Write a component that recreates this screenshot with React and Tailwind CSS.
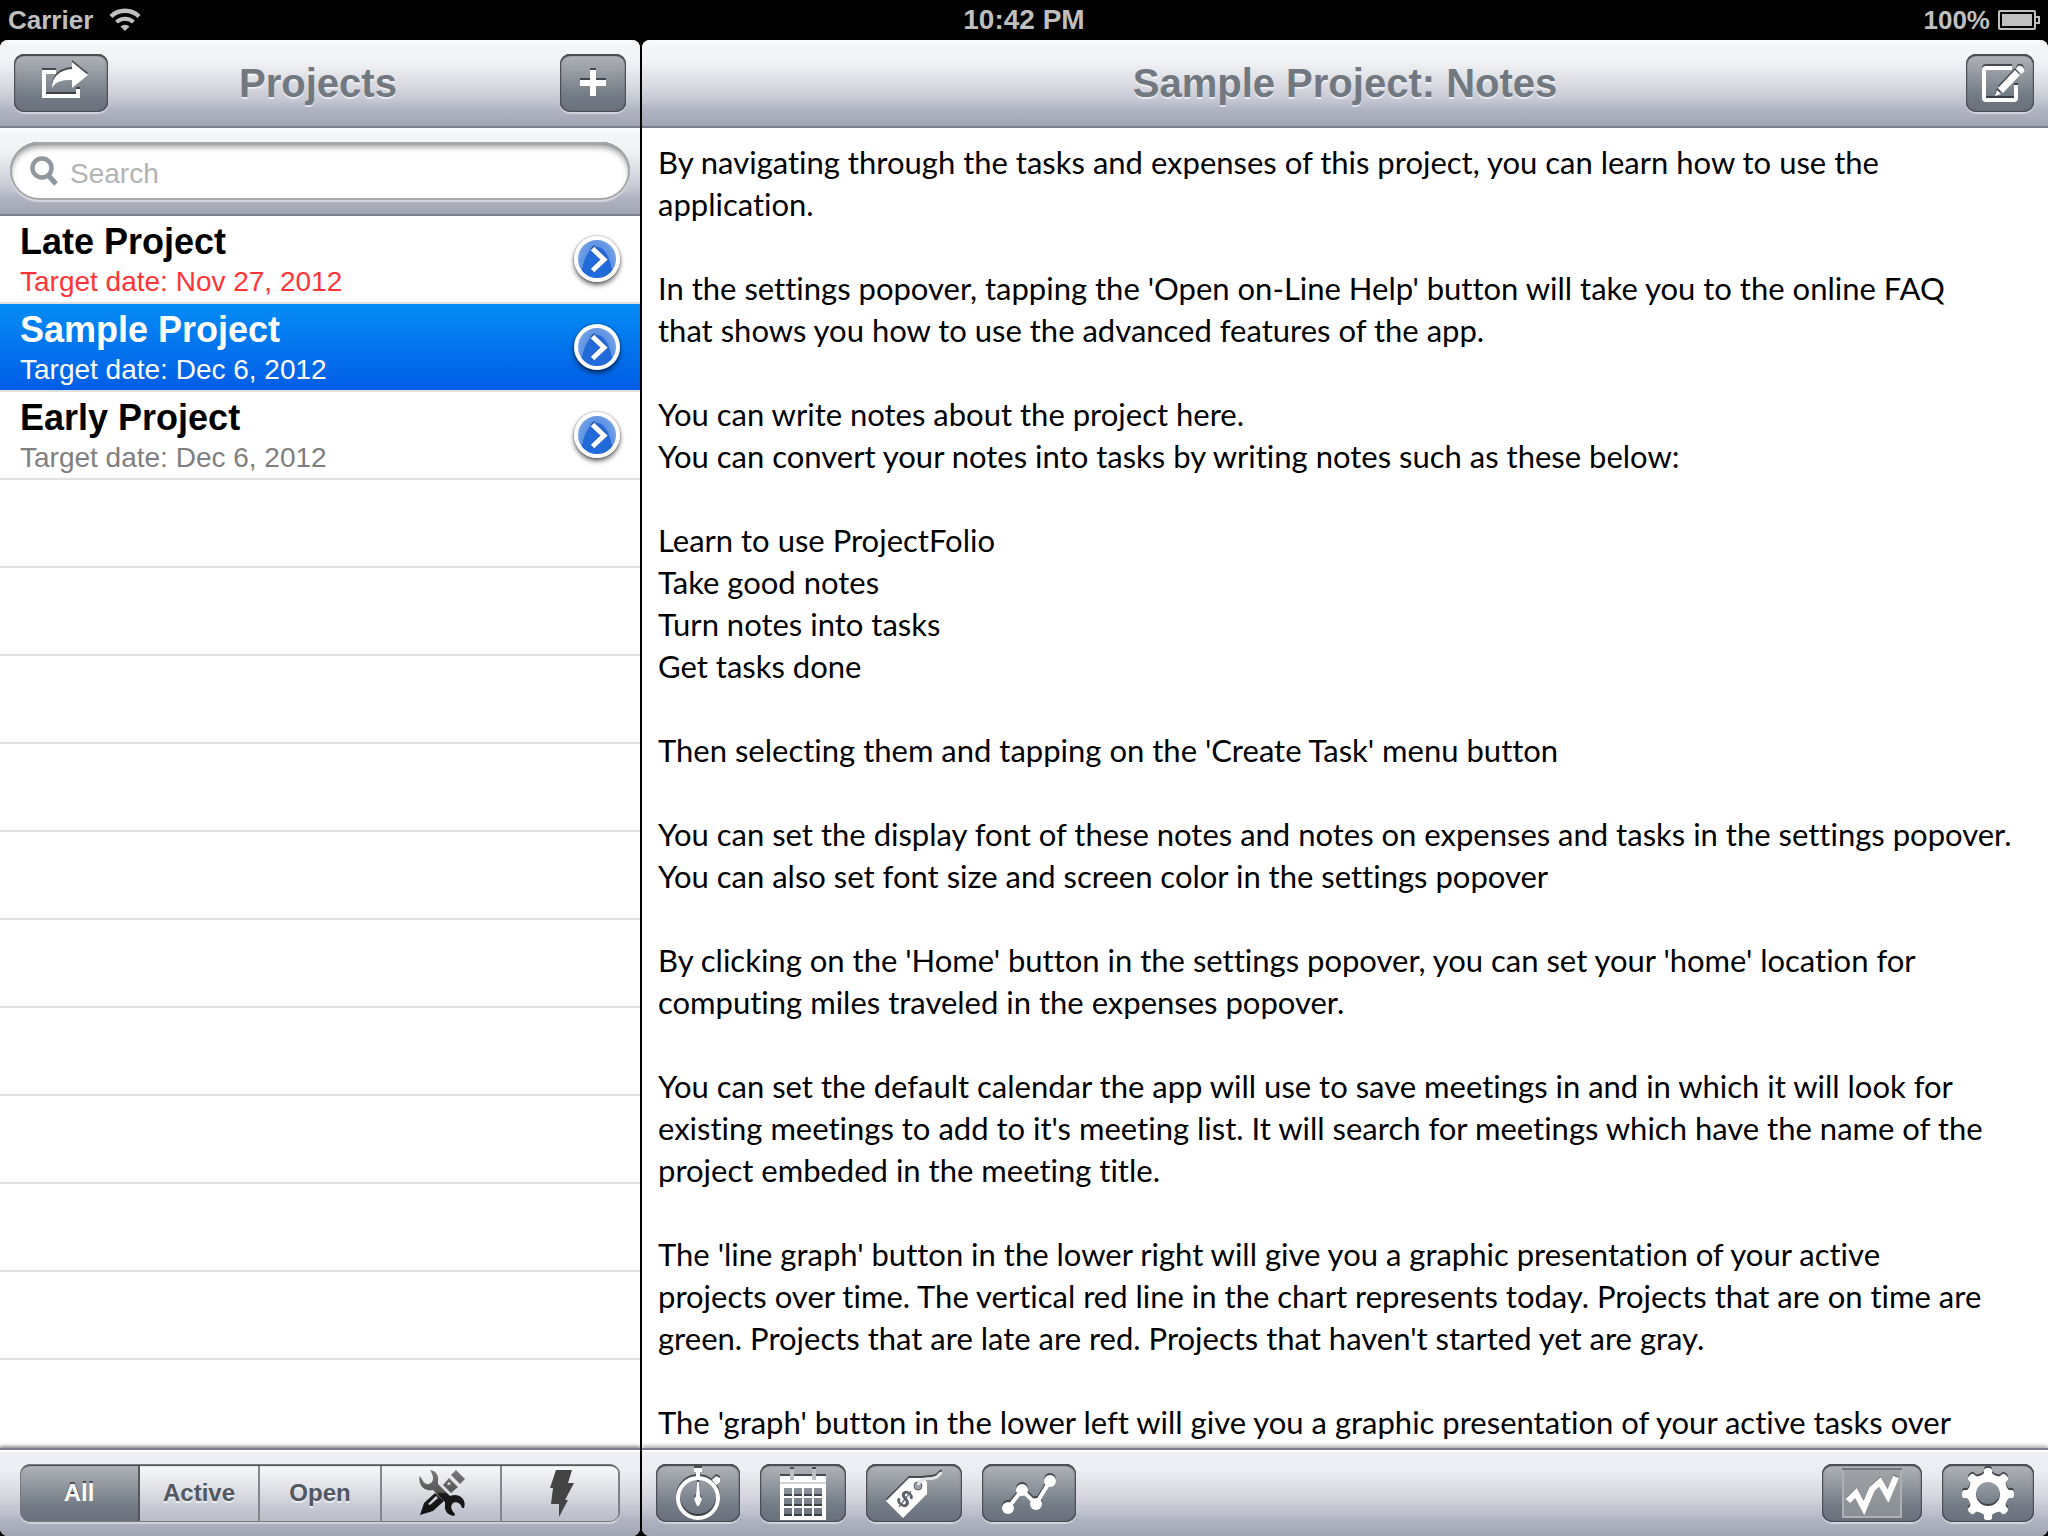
const projects = [
  { name: "Late Project", date: "Nov 27, 2012", state: "late" },
  { name: "Sample Project", date: "Dec 6, 2012", state: "selected" },
  { name: "Early Project", date: "Dec 6, 2012", state: "early" },
];

const emptyRows = Array.from({ length: 11 }, (_, i) => i);

const notes = `By navigating through the tasks and expenses of this project, you can learn how to use the application.

In the settings popover, tapping the 'Open on-Line Help' button will take you to the online FAQ
that shows you how to use the advanced features of the app.

You can write notes about the project here.
You can convert your notes into tasks by writing notes such as these below:

Learn to use ProjectFolio
Take good notes
Turn notes into tasks
Get tasks done

Then selecting them and tapping on the 'Create Task' menu button

You can set the display font of these notes and notes on expenses and tasks in the settings popover.
You can also set font size and screen color in the settings popover

By clicking on the 'Home' button in the settings popover, you can set your 'home' location for computing miles traveled in the expenses popover.

You can set the default calendar the app will use to save meetings in and in which it will look for existing meetings to add to it's meeting list. It will search for meetings which have the name of the project embeded in the meeting title.

The 'line graph' button in the lower right will give you a graphic presentation of your active
projects over time. The vertical red line in the chart represents today. Projects that are on time are
green. Projects that are late are red. Projects that haven't started yet are gray.

The 'graph' button in the lower left will give you a graphic presentation of your active tasks over`;

const barClass =
  "bg-[linear-gradient(to_bottom,#fbfcfc_0%,#f3f5f7_6%,#f1f3f5_24%,#dcdde3_50%,#c2c4d0_72%,#b2b4c3_80%,#a0a4b1_100%)]";

const toolbarClass =
  "relative z-10 flex h-22 shrink-0 items-start border-t-2 border-[#7b7d92] bg-[linear-gradient(to_bottom,#ffffff_0%,#eeeff4_4%,#eceef2_24%,#d9dae1_50%,#c2c4d0_70%,#b0b2c1_82%,#a0a4b1_100%)] pt-3.5 shadow-[0_-2px_4px_rgba(0,0,0,0.35)]";

function BarButton({ label, width, children }) {
  return (
    <button
      type="button"
      aria-label={label}
      className={`${width} h-[58px] shrink-0 rounded-[10px] bg-[linear-gradient(to_bottom,#b2b5b9_0%,#868d95_50%,#747c86_70%,#69707d_100%)] shadow-[inset_0_0_0_1px_#4b4e54,inset_0_2px_1px_#45484d,inset_0_0_2px_1px_#5a5d64,0_2px_1px_rgba(255,255,255,0.45)]`}
    >
      {children}
    </button>
  );
}

function Icon({ w, children }) {
  return (
    <svg viewBox={`0 0 ${w} 58`} className="block h-[58px] w-full drop-shadow-[0_-2px_0_rgba(40,43,48,0.75)]">
      {children}
    </svg>
  );
}

function WifiIcon() {
  return (
    <svg viewBox="0 0 32 24" className="h-6 w-8" fill="none" stroke="#bfbfbf" aria-hidden="true">
      <path d="M2 8.500 A20 20 0 0 1 30 8.500" strokeWidth="4.500" />
      <path d="M7.500 14 A12.500 12.500 0 0 1 24.500 14" strokeWidth="4" />
      <path d="M16 23 L11.500 18.500 A6.500 6.500 0 0 1 20.500 18.500 Z" fill="#bfbfbf" stroke="none" />
    </svg>
  );
}

function BatteryIcon() {
  return (
    <svg viewBox="0 0 42 20" className="h-5 w-[42px]" aria-hidden="true">
      <rect x="1" y="1" width="36" height="18" rx="1" fill="none" stroke="#bfbfbf" strokeWidth="2" />
      <rect x="4" y="4" width="30" height="12" fill="#bfbfbf" />
      <path d="M37 7 H41 V13 H37" fill="none" stroke="#bfbfbf" strokeWidth="2" />
    </svg>
  );
}

function DisclosureButton({ name }) {
  return (
    <button
      type="button"
      aria-label={`Details for ${name}`}
      className="size-[46px] shrink-0 rounded-full border-4 border-white bg-[radial-gradient(ellipse_at_50%_110%,#1f6bdc_0%,#2369d8_58%,#5c91e2_60%,#8fb3ea_100%)] shadow-[0_3px_5px_rgba(0,0,0,0.6),0_0_2px_rgba(0,0,0,0.5)]"
    >
      <svg viewBox="0 0 38 38" className="block size-full" fill="none">
        <path d="M14 8 L26 19.500 L14 31" stroke="#1b4fae" strokeWidth="5" transform="translate(0 -1)" />
        <path d="M14.500 8.500 L26 19.500 L14.500 30.500" stroke="#fff" strokeWidth="5" />
      </svg>
    </button>
  );
}

const rowStyles = {
  late: { row: "bg-white", title: "text-black", date: "text-[#ff3438]" },
  selected: {
    row: "bg-[linear-gradient(to_bottom,#058cf5_0%,#015de6_100%)] bg-origin-padding",
    title: "text-white",
    date: "text-white",
  },
  early: { row: "bg-white", title: "text-black", date: "text-[#7f7f7f]" },
};

function ProjectRow({ project }) {
  const s = rowStyles[project.state];
  return (
    <li className={`flex h-22 shrink-0 items-center justify-between border-b-2 border-[#e0e0e0] px-5 ${s.row}`}>
      <div className="pt-0.5">
        <h2 className={`text-4xl leading-11 font-bold ${s.title}`}>{project.name}</h2>
        <p className={`text-[28px] leading-9 ${s.date}`}>Target date: {project.date}</p>
      </div>
      <DisclosureButton name={project.name} />
    </li>
  );
}

function ToolsIcon() {
  return (
    <svg viewBox="0 0 48 46" className="ml-1 h-[46px] w-12" aria-hidden="true">
      <defs>
        <linearGradient id="toolShade" x1="0" y1="0" x2="0" y2="46" gradientUnits="userSpaceOnUse">
          <stop offset="0" stopColor="#7c7c7c" />
          <stop offset="0.480" stopColor="#555" />
          <stop offset="0.520" stopColor="#1c1c1c" />
          <stop offset="1" stopColor="#111" />
        </linearGradient>
      </defs>
      <g fill="url(#toolShade)">
        <path d="M11 0 C17 1 20 5 19 11 L19 14 L31 26 C36 24 41 25 44 29 C46 32 46 35 45 38 L43 38 C42 33 37 31 34 33 C31 36 32 40 36 44 L35 46 C29 45 25 41 26 35 L26 32 L14 20 C8 21 3 19 1 13 C0 10 0 8 1 6 L4 11 C6 15 10 15 13 12 C15 9 14 5 11 0 Z" />
        <path d="M37 0 L46 9 L41 14 L32 5 Z" />
        <path fillRule="evenodd" d="M30 8 L39 17 L32 23 L24 15 Z M30 12 L28 14 L29 15 L32 14 Z" />
        <path fillRule="evenodd" d="M16 23 L25 31 L14 41 L1 45 L5 33 Z M17 26 L9 34 L11 35 L19 28 Z" />
      </g>
    </svg>
  );
}

function BoltIcon() {
  return (
    <svg viewBox="0 0 24 47" className="ml-1 h-[47px] w-6" aria-hidden="true">
      <path d="M6 0 H22 L18 13 H24 L15 30 H18 L9 47 V34 H1 L3 18 H0 Z" fill="#444" />
    </svg>
  );
}

const segments = [
  { id: "all", label: "All", active: true },
  { id: "active", label: "Active" },
  { id: "open", label: "Open" },
  { id: "tools", label: "Tools", icon: <ToolsIcon /> },
  { id: "bolt", label: "Urgent", icon: <BoltIcon /> },
];

function FilterBar() {
  return (
    <div className="relative grid h-[58px] w-full grid-cols-[120fr_120fr_122fr_120fr_118fr] overflow-hidden rounded-[10px] shadow-[0_2px_1px_rgba(255,255,255,0.45)]">
      {segments.map((s) => (
        <button
          key={s.id}
          type="button"
          aria-label={s.label}
          aria-pressed={!!s.active}
          className={
            s.active
              ? "flex items-center justify-center border-r-2 border-[#54575d] bg-[linear-gradient(to_bottom,#b2b5b9_0%,#868d95_50%,#747c86_70%,#69707d_100%)] text-2xl font-bold text-white [text-shadow:0_-2px_0_rgba(40,43,48,0.7)]"
              : "flex items-center justify-center border-r-2 border-[#85868c] bg-[linear-gradient(to_bottom,#fafafb_0%,#dfe0e5_45%,#c0c2ce_85%,#bbbdca_100%)] text-2xl font-bold text-[#52585f] [text-shadow:0_2px_0_rgba(255,255,255,0.6)] last:border-r-0"
          }
        >
          {s.icon || s.label}
        </button>
      ))}
      <span className="pointer-events-none absolute inset-0 rounded-[10px] shadow-[inset_0_0_0_1px_#77797f,inset_0_2px_1px_#45484d]" />
    </div>
  );
}

function Sidebar() {
  return (
    <section className="flex w-160 shrink-0 flex-col overflow-hidden rounded-lg bg-white">
      <header className={`flex h-22 shrink-0 items-center justify-between border-b-2 border-[#7b7d92] px-3.5 ${barClass}`}>
        <BarButton label="Share" width="w-[94px]">
          <Icon w={94}>
            <path d="M42 18 H30 V42 H64 V35" fill="none" stroke="#fff" strokeWidth="4" />
            <path d="M74 21 L58 8 V15 C46 16 38 22 38 34 C42 27 48 26 58 26 V34 Z" fill="#fff" />
          </Icon>
        </BarButton>
        <h1 className="flex-1 pr-8 text-center text-[40px] leading-12 font-bold text-[#717880] [text-shadow:0_2px_0_rgba(255,255,255,0.6)]">
          Projects
        </h1>
        <BarButton label="Add project" width="w-[66px]">
          <Icon w={66}>
            <path d="M30 16 H36 V26 H46 V32 H36 V42 H30 V32 H20 V26 H30 Z" fill="#fff" />
          </Icon>
        </BarButton>
      </header>
      <form role="search" className={`flex h-22 shrink-0 items-center border-b-2 border-[#7b7d92] px-2.5 ${barClass}`}>
        <label className="flex h-[58px] w-full items-center gap-3 rounded-full bg-white pl-5 shadow-[inset_0_0_0_2px_#a5a7ab,inset_0_2px_1px_#66686c,inset_0_5px_6px_rgba(0,0,0,0.4),0_2px_1px_rgba(255,255,255,0.5)]">
          <svg viewBox="0 0 28 30" className="h-[30px] w-7" fill="none" stroke="#8f979f" aria-hidden="true">
            <circle cx="12" cy="12" r="9.500" strokeWidth="4.500" />
            <path d="M18 19 L26 28" strokeWidth="5" />
          </svg>
          <input
            type="text"
            aria-label="Search"
            placeholder="Search"
            className="min-w-0 flex-1 pt-1.5 text-[28px] leading-9 text-black outline-none placeholder:text-[#b3b3b3]"
          />
        </label>
      </form>
      <ul className="flex min-h-0 flex-1 flex-col overflow-hidden">
        {projects.map((p) => (
          <ProjectRow key={p.name} project={p} />
        ))}
        {emptyRows.map((i) => (
          <li key={i} aria-hidden="true" className="h-22 shrink-0 border-b-2 border-[#e0e0e0]" />
        ))}
      </ul>
      <footer className={`${toolbarClass} px-5`}>
        <FilterBar />
      </footer>
    </section>
  );
}

function GearShape() {
  const teeth = [0, 45, 90, 135, 180, 225, 270, 315];
  return (
    <g>
      <circle cx="46" cy="30" r="16" fill="none" stroke="#fff" strokeWidth="8" />
      {teeth.map((a) => (
        <path key={a} d="M39 12 L42 9 V6 Q42 4 46 4 Q50 4 50 6 V9 L53 12 Z" fill="#fff" transform={`rotate(${a} 46 30)`} />
      ))}
    </g>
  );
}

function Detail() {
  return (
    <section className="flex min-w-0 flex-1 flex-col overflow-hidden rounded-lg bg-white">
      <header className={`grid h-22 shrink-0 grid-cols-[1fr_auto_1fr] items-center border-b-2 border-[#7b7d92] px-3.5 ${barClass}`}>
        <h1 className="col-start-2 text-[40px] leading-12 font-bold text-[#717880] [text-shadow:0_2px_0_rgba(255,255,255,0.6)]">
          Sample Project: Notes
        </h1>
        <div className="flex justify-end">
          <BarButton label="Edit notes" width="w-[68px]">
            <Icon w={68}>
              <path d="M46 14 H20 Q18 14 18 16 V44 Q18 46 20 46 H48 Q50 46 50 44 V31" fill="none" stroke="#fff" strokeWidth="4" />
              <path d="M29 42 L31 36 L35 40 Z" fill="#fff" />
              <path d="M32 34 L49 16 L54 21 L37 39 Z" fill="#fff" />
              <path d="M50 15 L52 12 Q54 11 57 13 Q59 16 58 18 L55 20 Z" fill="#fff" />
            </Icon>
          </BarButton>
        </div>
      </header>
      <textarea
        aria-label="Project notes"
        defaultValue={notes}
        spellCheck={false}
        className="min-h-0 w-full flex-1 resize-none overflow-hidden px-4 pt-[13px] font-['Lato',sans-serif] text-[31px] leading-[42px] text-black outline-none [font-variant-ligatures:none]"
      />
      <footer className={`${toolbarClass} px-3.5`}>
        <div className="flex flex-1 gap-5">
          <BarButton label="Timer" width="w-[84px]">
            <Icon w={84}>
              <circle cx="42" cy="34" r="20" fill="none" stroke="#fff" strokeWidth="4" />
              <path d="M38 4 H46 V8 H44 V14 H40 V8 H38 Z" fill="#fff" />
              <path d="M56 16 L60 12 L64 14 V18 L60 21 Z" fill="#fff" />
              <path d="M41 18 H43 L44 32 L46 35 L43 42 H41 L38 35 L40 32 Z" fill="#fff" />
            </Icon>
          </BarButton>
          <BarButton label="Calendar" width="w-[86px]">
            <Icon w={86}>
              <path
                fillRule="evenodd"
                fill="#fff"
                d="M20 12 H66 V56 H20 Z M24 24 V32 H32 V24 Z M34 24 V32 H42 V24 Z M44 24 V32 H52 V24 Z M54 24 V32 H62 V24 Z M24 34 V42 H32 V34 Z M34 34 V42 H42 V34 Z M44 34 V42 H52 V34 Z M54 34 V42 H62 V34 Z M24 44 V52 H32 V44 Z M34 44 V52 H42 V44 Z M44 44 V52 H52 V44 Z M54 44 V52 H62 V44 Z"
              />
              <path d="M20 18 H66 V20 H20 Z" fill="#d4d5d7" />
              <path d="M30 5 H34 V16 H30 Z M52 5 H56 V16 H52 Z" fill="#bfc1c4" />
            </Icon>
          </BarButton>
          <BarButton label="Expenses" width="w-24">
            <Icon w={96}>
              <path d="M20 37 L43 14 L58 14 L61 18 L61 30 L37 54 Z" fill="#fff" />
              <circle cx="52" cy="22" r="4" fill="#9a9fa5" stroke="#5d636b" strokeWidth="1" />
              <path d="M52 21 C56 12 62 16 68 14 C74 13 72 9 76 9" fill="none" stroke="#e4e5e7" strokeWidth="3" />
              <text x="39" y="43" textAnchor="middle" fontSize="24" fontWeight="700" fill="#59616b" transform="rotate(38 39 35)">
                $
              </text>
            </Icon>
          </BarButton>
          <BarButton label="Task graph" width="w-[94px]">
            <Icon w={94}>
              <path d="M26 44 L40 26 L54 40 L68 17" fill="none" stroke="#fff" strokeWidth="4" />
              <g fill="#fff">
                <circle cx="26" cy="44" r="6" />
                <circle cx="40" cy="26" r="6" />
                <circle cx="54" cy="40" r="6" />
                <circle cx="68" cy="17" r="6" />
              </g>
            </Icon>
          </BarButton>
        </div>
        <div className="flex gap-5">
          <BarButton label="Line graph" width="w-[100px]">
            <svg viewBox="0 0 100 58" className="block h-[58px] w-full">
              <rect x="21" y="5" width="58" height="48" fill="#9a9c9f" fillOpacity="0.7" stroke="#aeb0b4" strokeWidth="2" />
              <path d="M20 5 H80" stroke="#74777c" strokeWidth="2" />
              <path d="M26 35 L34 27 L42 42 L50 23 L58 16 L66 30 L74 11" fill="none" stroke="#7d8186" strokeWidth="5" />
              <path d="M26 37 L34 29 L42 44 L50 25 L58 18 L66 32 L74 13" fill="none" stroke="#fff" strokeWidth="6" />
            </svg>
          </BarButton>
          <BarButton label="Settings" width="w-[92px]">
            <Icon w={92}>
              <GearShape />
            </Icon>
          </BarButton>
        </div>
      </footer>
    </section>
  );
}

export default function App() {
  return (
    <div className="flex h-screen flex-col overflow-hidden bg-black font-['Liberation_Sans',Arial,sans-serif]">
      <div className="grid h-10 shrink-0 grid-cols-3 items-center px-2 font-bold text-[#bfbfbf]">
        <div className="flex items-center gap-4 text-[26px] leading-10">
          <span>Carrier</span>
          <WifiIcon />
        </div>
        <time className="text-center text-[28px] leading-10">10:42 PM</time>
        <div className="flex items-center justify-end gap-2 text-[26px] leading-10">
          <span>100%</span>
          <BatteryIcon />
        </div>
      </div>
      <main className="flex min-h-0 flex-1 gap-0.5">
        <Sidebar />
        <Detail />
      </main>
    </div>
  );
}
